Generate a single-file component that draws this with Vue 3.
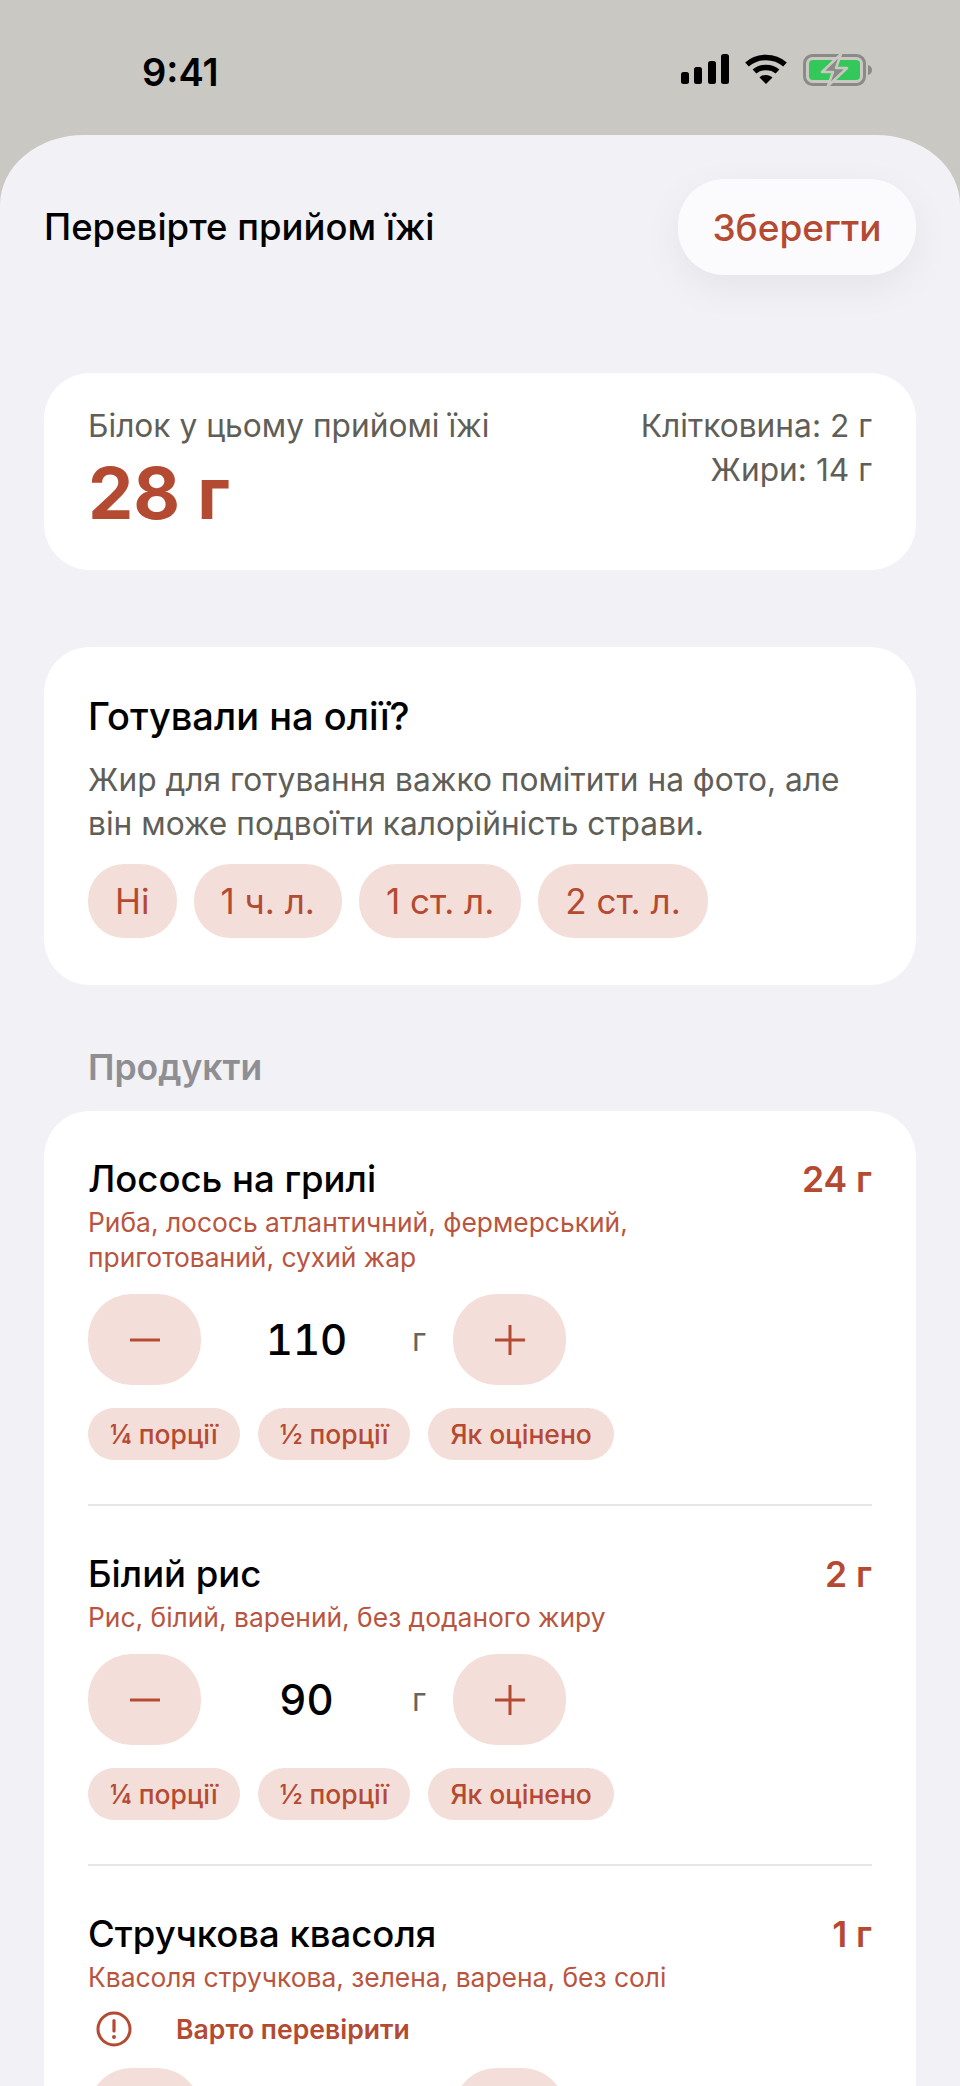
<template>
  <div class="phone">
    <!-- Status bar -->
    <div class="status">
      <span class="clock">9:41</span>
      <div class="status-icons">
        <svg class="signal" width="48" height="30" viewBox="0 0 48 30">
          <rect x="0" y="18" width="8" height="12" rx="2.5" />
          <rect x="13" y="13" width="8" height="17" rx="2.5" />
          <rect x="27" y="7" width="8" height="23" rx="2.5" />
          <rect x="40" y="0" width="8" height="30" rx="2.5" />
        </svg>
        <svg class="wifi" width="42" height="30" viewBox="0 0 42 30" fill="none" stroke="#000" stroke-width="5.500">
          <path d="M2 10.500C12.500 1 29.500 1 40 10.500" />
          <path d="M9.500 17.500C15.500 12 26.500 12 32.500 17.500" />
          <path d="M21 30L14.500 23.500C18 20 24 20 27.500 23.500Z" fill="#000" stroke="none" />
        </svg>
        <svg class="battery" width="69" height="32" viewBox="0 0 69 32">
          <rect x="1.500" y="1.500" width="60" height="29" rx="8" fill="none" stroke="#8a8a86" stroke-width="3" />
          <rect x="6" y="6" width="51" height="20" rx="4" fill="#34c759" />
          <path d="M65 11C67.500 11.500 69 13.500 69 16C69 18.500 67.500 20.500 65 21Z" fill="#8a8a86" />
          <path d="M38 0L19 18H30L25 32L44 14H33Z" fill="#8a8a86" stroke="#cac8c2" stroke-width="2.500" stroke-linejoin="round" />
        </svg>
      </div>
    </div>

    <div class="sheet">
      <header class="top">
        <h1>Перевірте прийом їжі</h1>
        <button class="save">Зберегти</button>
      </header>

      <!-- Totals -->
      <section class="card totals">
        <div>
          <div class="muted">Білок у цьому прийомі їжі</div>
          <div class="protein">28 г</div>
        </div>
        <div class="macros muted">
          <div>Клітковина: 2 г</div>
          <div>Жири: 14 г</div>
        </div>
      </section>

      <!-- Oil question -->
      <section class="card oil">
        <h2>Готували на олії?</h2>
        <p class="muted">Жир для готування важко помітити на фото, але він може подвоїти калорійність страви.</p>
        <div class="oil-options">
          <button v-for="o in oilOptions" :key="o" class="oil-chip">{{ o }}</button>
        </div>
      </section>

      <h3 class="section-label">Продукти</h3>

      <!-- Foods -->
      <section class="card foods">
        <article v-for="f in foods" :key="f.name" class="food">
          <div class="food-head">
            <div class="food-name">{{ f.name }}</div>
            <div class="food-protein">{{ f.protein }}</div>
          </div>
          <div class="food-desc">{{ f.desc }}</div>
          <div v-if="f.warn" class="warn">
            <svg width="38" height="38" viewBox="0 0 38 38" fill="none" stroke="#b54a32">
              <circle cx="19" cy="19" r="16" stroke-width="3" />
              <path d="M19 10.500V21" stroke-width="3.200" stroke-linecap="round" />
              <circle cx="19" cy="27" r="2" fill="#b54a32" stroke="none" />
            </svg>
            <span>Варто перевірити</span>
          </div>
          <div class="stepper">
            <button class="step" aria-label="Менше">
              <svg width="32" height="32" viewBox="0 0 32 32"><path d="M1 16H31" stroke="#b54a32" stroke-width="3" /></svg>
            </button>
            <div class="amount">{{ f.grams }}</div>
            <div class="unit">{{ f.grams ? "г" : "" }}</div>
            <button class="step" aria-label="Більше">
              <svg width="32" height="32" viewBox="0 0 32 32"><path d="M1 16H31M16 1V31" stroke="#b54a32" stroke-width="3" /></svg>
            </button>
          </div>
          <div v-if="f.grams" class="quick">
            <button class="quick-chip">¼ порції</button>
            <button class="quick-chip">½ порції</button>
            <button class="quick-chip">Як оцінено</button>
          </div>
        </article>
      </section>
    </div>
  </div>
</template>

<script setup>
const oilOptions = ["Ні", "1 ч. л.", "1 ст. л.", "2 ст. л."];

// the third row runs off the bottom of the screen, only its stepper tops show
const foods = [
  {
    name: "Лосось на грилі",
    protein: "24 г",
    desc: "Риба, лосось атлантичний, фермерський, приготований, сухий жар",
    grams: 110
  },
  {
    name: "Білий рис",
    protein: "2 г",
    desc: "Рис, білий, варений, без доданого жиру",
    grams: 90
  },
  {
    name: "Стручкова квасоля",
    protein: "1 г",
    desc: "Квасоля стручкова, зелена, варена, без солі",
    warn: true
  }
];
</script>

<style>
html, body {
  margin: 0;
  background: #cac8c2;
}
</style>

<style scoped>
.phone {
  height: 2086px;
  overflow: hidden;
  background: #cac8c2;
  font-family: Inter, "Noto Sans", sans-serif;
  color: #000;
}
button {
  border: 0;
  padding: 0;
  font-family: inherit;
  cursor: pointer;
}
h1, h2, h3, p {
  margin: 0;
}

/* Status bar */
.status {
  height: 135px;
  display: flex;
  justify-content: space-between;
  box-sizing: border-box;
  padding: 54px 88px 0 142px;
}
.clock {
  font-size: 38px;
  line-height: 36px;
  font-weight: 600;
}
.status-icons {
  display: flex;
  align-items: flex-start;
  gap: 16px;
}

/* Sheet */
.sheet {
  min-height: 1951px;
  box-sizing: border-box;
  padding: 44px 44px 0;
  background: #f1f1f6;
  border-radius: 84px 84px 0 0 / 70px 70px 0 0;
}
.top {
  display: flex;
  justify-content: space-between;
  align-items: center;
  margin-bottom: 98px;
}
.top h1 {
  font-size: 36.5px;
  font-weight: 500;
}
.save {
  width: 238px;
  height: 96px;
  border-radius: 46px;
  background: #fbfafd;
  color: #b54a32;
  font-size: 37px;
  font-weight: 500;
  box-shadow: 0 12px 40px rgba(0, 0, 0, 0.06);
}

/* Cards */
.card {
  background: #fff;
  border-radius: 46px;
  padding: 0 44px;
}
.muted {
  color: #5f5e57;
  font-size: 31.7px;
  line-height: 44px;
}
.totals {
  height: 197px;
  box-sizing: border-box;
  padding-top: 31px;
  display: flex;
  justify-content: space-between;
  margin-bottom: 77px;
}
.protein {
  margin-top: 1px;
  font-size: 72px;
  line-height: 88px;
  font-weight: 700;
  color: #b54a32;
}
.macros {
  text-align: right;
}
.oil {
  height: 338px;
  box-sizing: border-box;
  padding-top: 47px;
}
.oil h2 {
  font-size: 38px;
  line-height: 44px;
  font-weight: 500;
}
.oil p {
  margin-top: 20px;
}
.oil-options {
  display: flex;
  gap: 17px;
  margin-top: 18px;
}
.oil-chip {
  height: 74px;
  padding: 0 27px;
  border-radius: 36px;
  background: #f3ded9;
  color: #b54a32;
  font-size: 35px;
}
.section-label {
  margin: 61px 0 21px 44px;
  font-size: 35.5px;
  line-height: 44px;
  font-weight: 600;
  color: #8e8e93;
}

/* Foods */
.foods {
  padding-top: 44px;
}
.food {
  padding-bottom: 44px;
  margin-bottom: 44px;
  border-bottom: 2px solid #e6e6ea;
}
.food-head {
  display: flex;
  justify-content: space-between;
  align-items: center;
  height: 48px;
}
.food-name {
  font-size: 36.5px;
  font-weight: 500;
}
.food-protein {
  font-size: 35.5px;
  font-weight: 600;
  color: #b54a32;
}
.food-desc {
  max-width: 640px;
  margin-top: 2px;
  font-size: 26.4px;
  line-height: 35px;
  color: #b9553f;
}
.warn {
  display: flex;
  align-items: center;
  gap: 43px;
  height: 40px;
  margin-top: 14px;
  padding-left: 7px;
  font-size: 26.6px;
  font-weight: 600;
  color: #b54a32;
}
.stepper {
  display: flex;
  align-items: center;
  margin-top: 19px;
}
.step {
  width: 113px;
  height: 91px;
  border-radius: 44px;
  background: #f3ded9;
  display: flex;
  align-items: center;
  justify-content: center;
}
.amount {
  width: 211px;
  text-align: center;
  font-size: 42px;
  font-weight: 500;
  font-variant-numeric: tabular-nums;
}
.unit {
  width: 41px;
  font-size: 32px;
  color: #66655f;
}
.quick {
  display: flex;
  gap: 18px;
  margin-top: 23px;
}
.quick-chip {
  height: 52px;
  padding: 0 22px;
  border-radius: 26px;
  background: #f3ded9;
  color: #b54a32;
  font-size: 26.5px;
  font-weight: 500;
}
</style>
